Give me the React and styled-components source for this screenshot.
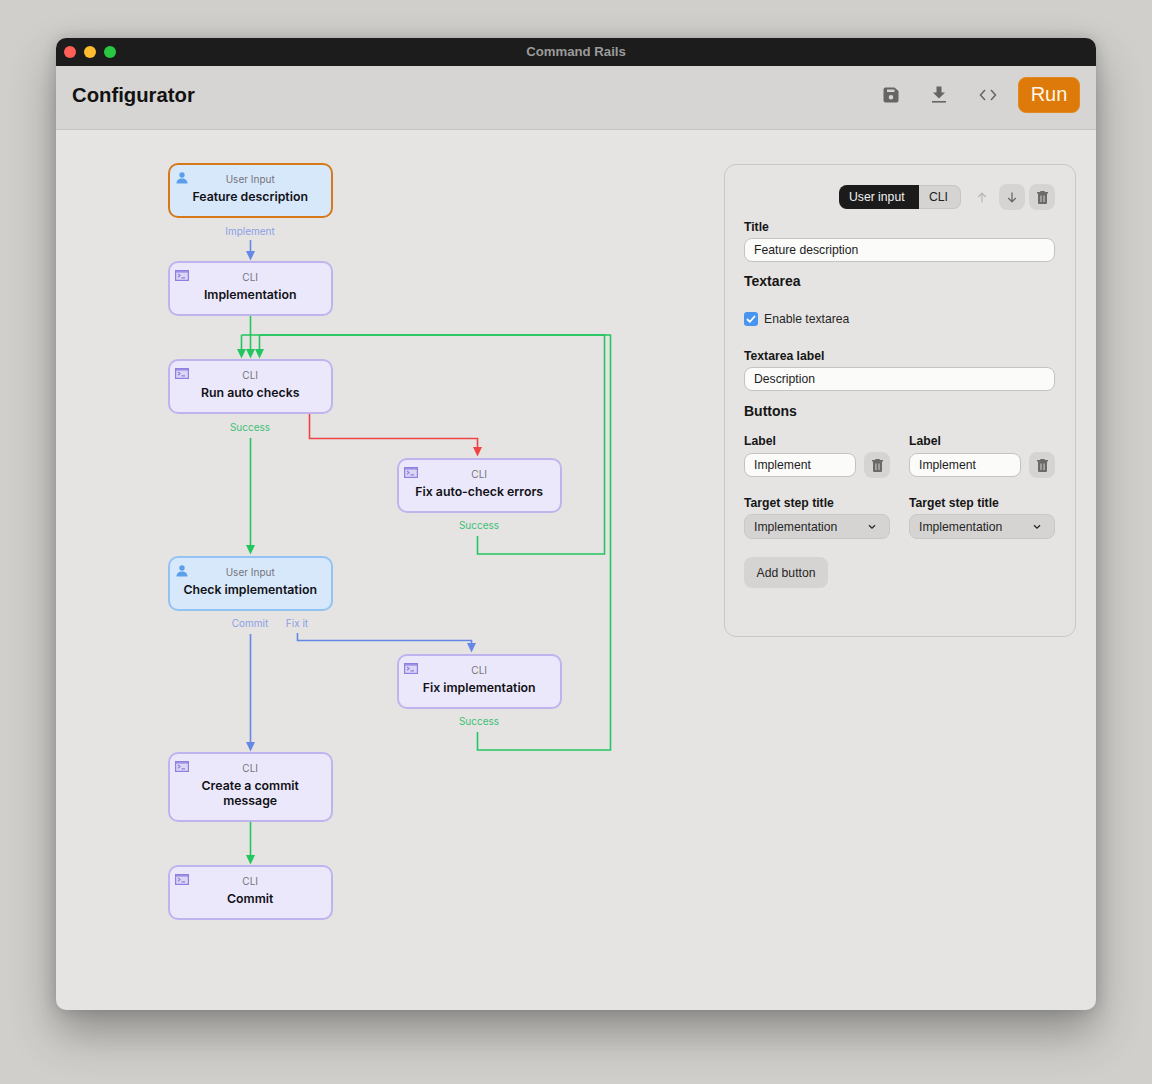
import React from "react";
import styled, { createGlobalStyle } from "styled-components";

const Global = createGlobalStyle`
  html, body {
    margin: 0;
    background: #d0cfcc;
    font-family: "Liberation Sans", Arial, sans-serif;
  }
`;

const Page = styled.div`
  width: 1152px;
  height: 1084px;
  padding: 38px 56px 74px;
  box-sizing: border-box;
  overflow: hidden;
  background: #d0cfcc;
`;

const Window = styled.div`
  display: flex;
  flex-direction: column;
  height: 972px;
  border-radius: 10px;
  overflow: hidden;
  background: #e5e4e2;
  box-shadow: 0 22px 44px rgba(60, 60, 58, 0.46), 0 0 14px rgba(60, 60, 58, 0.24);
`;

const TitleBar = styled.div`
  position: relative;
  display: flex;
  align-items: center;
  justify-content: center;
  flex: none;
  height: 28px;
  padding-bottom: 2px;
  box-sizing: border-box;
  background: #1c1c1c;
  color: #9b9b9b;
  font-size: 13.2px;
  font-weight: 700;
`;

const Lights = styled.div`
  position: absolute;
  left: 8px;
  top: 8px;
  display: flex;
  gap: 8px;
`;

const Light = styled.span`
  width: 12px;
  height: 12px;
  border-radius: 50%;
  background: ${(p) => p.$color};
`;

const Toolbar = styled.div`
  display: flex;
  align-items: center;
  flex: none;
  height: 64px;
  padding: 0 16px 6px;
  box-sizing: border-box;
  background: #d6d5d3;
  border-bottom: 1px solid #c6c5c3;
`;

const Heading = styled.h1`
  flex: 1;
  margin: 2px 0 0;
  font-size: 20.3px;
  font-weight: 700;
  color: #121212;
`;

const ToolIcon = styled.button`
  display: flex;
  align-items: center;
  justify-content: center;
  width: 24px;
  height: 24px;
  margin-right: ${(p) => p.$gap}px;
  padding: 0;
  border: none;
  background: none;
  color: #666564;
`;

const RunButton = styled.button`
  width: 62px;
  height: 36px;
  padding: 0;
  border: 1px solid #e28a22;
  border-radius: 8px;
  background: #dd7a09;
  color: #fff6e8;
  font-family: inherit;
  font-size: 20px;
`;

const Body = styled.div`
  display: flex;
  flex: 1;
  min-height: 0;
`;

const Graph = styled.div`
  position: relative;
  flex: 1;
`;

const Edges = styled.svg`
  position: absolute;
  left: -0.3px;
  top: 0;
  width: 668px;
  height: 880px;
`;

const nodeTheme = {
  input: { bg: "#d8e8fb", border: "#93c3f3", icon: "#5b9fec" },
  cli: { bg: "#ece8fc", border: "#c0b4ee", icon: "#8f7fe0" },
};

const Node = styled.div`
  position: absolute;
  left: ${(p) => p.$x}px;
  top: ${(p) => p.$y}px;
  width: 165px;
  height: ${(p) => p.$h}px;
  box-sizing: border-box;
  padding: 7px 10px 0;
  border: 2px solid ${(p) => (p.$active ? "#d5791a" : nodeTheme[p.$kind].border)};
  border-radius: 10px;
  background: ${(p) => nodeTheme[p.$kind].bg};
  text-align: center;
  font-family: Inter, sans-serif;
`;

const NodeIcon = styled.span`
  position: absolute;
  left: ${(p) => (p.$kind === "input" ? 6 : 5)}px;
  top: 7px;
  display: flex;
  color: ${(p) => nodeTheme[p.$kind].icon};
`;

const NodeKind = styled.div`
  font-size: 10px;
  line-height: 14px;
  color: #74747a;
`;

const NodeTitle = styled.div`
  margin-top: 3px;
  font-size: 12.3px;
  font-weight: 600;
  line-height: 15px;
  color: #111116;
`;

const EdgeLabel = styled.span`
  position: absolute;
  left: ${(p) => p.$x}px;
  top: ${(p) => p.$y}px;
  transform: translate(-50%, -50%);
  font-family: Inter, sans-serif;
  font-size: 10px;
  color: ${(p) => p.$color};
  white-space: nowrap;
`;

const Panel = styled.div`
  display: flex;
  flex-direction: column;
  flex: none;
  align-self: flex-start;
  width: 352px;
  height: 473px;
  margin: 34px 20px 0 0;
  padding: 19px 20px 19px 19px;
  box-sizing: border-box;
  border: 1px solid #c9c8c6;
  border-radius: 12px;
`;

const PanelTop = styled.div`
  display: flex;
  align-items: center;
  justify-content: flex-end;
  height: 26px;
  margin-bottom: 10px;
`;

const Segmented = styled.div`
  display: flex;
  height: 24px;
  margin-right: 8px;
  border-radius: 8px;
  overflow: hidden;
  background: #d5d4d2;
  box-shadow: inset 0 0 0 1px #c8c7c5;
`;

const Segment = styled.span`
  display: flex;
  align-items: center;
  width: ${(p) => (p.$on ? 80 : 42)}px;
  padding-left: 10px;
  box-sizing: border-box;
  background: ${(p) => (p.$on ? "#1b1b1b" : "transparent")};
  color: ${(p) => (p.$on ? "#f2f2f2" : "#222")};
  font-size: 12.2px;
`;

const IconButton = styled.button`
  display: flex;
  align-items: center;
  justify-content: center;
  flex: none;
  width: 26px;
  height: 26px;
  margin-left: ${(p) => p.$gap || 0}px;
  padding: 0;
  border: none;
  border-radius: 8px;
  background: ${(p) => (p.$plain ? "none" : "#d5d4d2")};
  color: ${(p) => (p.$plain ? "#b9b8b6" : "#6b6a69")};
`;

const FieldLabel = styled.label`
  display: block;
  margin-bottom: 4px;
  font-size: 12.2px;
  font-weight: 700;
  line-height: 14px;
  color: #161616;
`;

const TextInput = styled.div`
  display: flex;
  align-items: center;
  width: 100%;
  height: 24px;
  padding: 0 9px;
  box-sizing: border-box;
  border: 1px solid #c4c3c1;
  border-radius: 8px;
  background: #fbfbfa;
  font-size: 12.2px;
  color: #1c1c1c;
`;

const SubHeading = styled.h2`
  margin: ${(p) => p.$top}px 0 ${(p) => p.$bottom}px;
  font-size: 14px;
  font-weight: 700;
  line-height: 18px;
  color: #161616;
`;

const CheckRow = styled.div`
  display: flex;
  align-items: center;
  gap: 6px;
  height: 14px;
  margin-bottom: 23px;
  font-size: 12.2px;
  color: #262626;
`;

const CheckBox = styled.span`
  display: flex;
  align-items: center;
  justify-content: center;
  width: 14px;
  height: 14px;
  border-radius: 3px;
  background: #4795ef;
  color: #fff;
`;

const ButtonGrid = styled.div`
  display: grid;
  grid-template-columns: 146px 146px;
  column-gap: 19px;
`;

const InputRow = styled.div`
  display: flex;
  align-items: center;
  gap: 8px;
  margin-bottom: 18px;
`;

const SelectBox = styled.div`
  display: flex;
  align-items: center;
  justify-content: space-between;
  height: 25px;
  padding: 0 13px 0 9px;
  box-sizing: border-box;
  border: 1px solid #c9c8c6;
  border-radius: 8px;
  background: #d5d4d2;
  font-size: 12.2px;
  color: #262626;
`;

const AddButton = styled.button`
  align-self: flex-start;
  width: 84px;
  height: 31px;
  margin-top: 18px;
  padding: 0;
  border: none;
  border-radius: 8px;
  background: #d5d4d2;
  color: #262626;
  font-family: inherit;
  font-size: 12.2px;
`;

const SaveIcon = () => (
  <svg width="16" height="16" viewBox="0 0 16 16" fill="currentColor">
    <path
      fillRule="evenodd"
      d="M2.5 0.5h9L15.5 4v9.5a2 2 0 0 1-2 2h-11a2 2 0 0 1-2-2v-11a2 2 0 0 1 2-2zM4 2.5v2.5h7.5V2.5zM8 8a2.3 2.3 0 1 0 0 4.6A2.3 2.3 0 0 0 8 8z"
    />
  </svg>
);

const DownloadIcon = () => (
  <svg width="16" height="18" viewBox="0 0 16 18" fill="currentColor">
    <path d="M5.5 0.5h5v6h3.6L8 12.6 1.9 6.5h3.6z" />
    <rect x="1" y="15" width="14" height="1.6" />
  </svg>
);

const CodeIcon = () => (
  <svg width="18" height="12" viewBox="0 0 18 12" fill="none" stroke="currentColor" strokeWidth="1.5">
    <path d="M6 1 1.5 6 6 11M12 1l4.5 5L12 11" />
  </svg>
);

const UserIcon = () => (
  <svg width="12" height="12" viewBox="0 0 12 12" fill="currentColor">
    <circle cx="6" cy="3" r="2.7" />
    <path d="M0.5 11.5c0-3.2 2.4-5 5.5-5s5.5 1.8 5.5 5z" />
  </svg>
);

const TerminalIcon = () => (
  <svg width="14" height="11" viewBox="0 0 14 11" fill="none" stroke="currentColor" strokeWidth="1.2">
    <rect x="0.6" y="0.6" width="12.8" height="9.8" fill="currentColor" fillOpacity="0.18" />
    <path d="M0.6 1.8h12.8M3 4l2 1.6L3 7.2M6.5 7.8H10" />
  </svg>
);

const TrashIcon = () => (
  <svg width="11" height="13" viewBox="0 0 11 13" fill="currentColor">
    <path d="M3.5 0h4L8 1h3v1.6H10V12a1 1 0 0 1-1 1H2a1 1 0 0 1-1-1V2.600H0V1h3z" />
    <rect x="3.3" y="4.5" width="1.3" height="6.5" fill="#d5d4d2" opacity="0.75" />
    <rect x="6.4" y="4.5" width="1.3" height="6.5" fill="#d5d4d2" opacity="0.75" />
  </svg>
);

const ArrowIcon = ({ down }) => (
  <svg width="10" height="11" viewBox="0 0 10 11" fill="none" stroke="currentColor" strokeWidth="1.3">
    <path d={down ? "M5 0.5v9M1.2 6 5 9.8 8.8 6" : "M5 10.5v-9M1.2 5 5 1.2 8.8 5"} />
  </svg>
);

const Chevron = () => (
  <svg width="8" height="6" viewBox="0 0 8 6" fill="none" stroke="currentColor" strokeWidth="1.3">
    <path d="M1 1.2l3 3 3-3" />
  </svg>
);

const GREEN = "#22c55e";
const BLUE = "#6587e6";
const RED = "#ef4444";

// graph coordinates: window content origin is 56,130 on the page
const edges = [
  { color: BLUE, d: "M194.5 110V122", tip: [194.5, 131] },
  { color: GREEN, d: "M194.5 186V220", tip: [194.5, 229] },
  { color: GREEN, d: "M185.5 205V220", tip: [185.5, 229] },
  { color: GREEN, d: "M203.5 205V220", tip: [203.5, 229] },
  { color: GREEN, d: "M185.5 205H554.5V620H421.5V602" },
  { color: GREEN, d: "M203.5 205H548.5V424H421.5V406" },
  { color: RED, d: "M253.5 284V308.5H421.5V318", tip: [421.5, 327] },
  { color: GREEN, d: "M194.5 308V416", tip: [194.5, 425] },
  { color: BLUE, d: "M194.5 504V613", tip: [194.5, 622] },
  { color: BLUE, d: "M241.5 503V510.5H415.5V514", tip: [415.5, 523] },
  { color: GREEN, d: "M194.5 692V726", tip: [194.5, 735] },
];

const nodes = [
  { x: 111.7, y: 33, h: 55, kind: "input", label: "User Input", title: "Feature description", active: true },
  { x: 111.7, y: 131, h: 55, kind: "cli", label: "CLI", title: "Implementation" },
  { x: 111.7, y: 229, h: 55, kind: "cli", label: "CLI", title: "Run auto checks" },
  { x: 340.7, y: 328, h: 55, kind: "cli", label: "CLI", title: "Fix auto-check errors" },
  { x: 111.7, y: 426, h: 55, kind: "input", label: "User Input", title: "Check implementation" },
  { x: 340.7, y: 524, h: 55, kind: "cli", label: "CLI", title: "Fix implementation" },
  { x: 111.7, y: 622, h: 70, kind: "cli", label: "CLI", title: "Create a commit message" },
  { x: 111.7, y: 735, h: 55, kind: "cli", label: "CLI", title: "Commit" },
];

const labels = [
  { x: 194, y: 101, color: "#8c9fe6", text: "Implement" },
  { x: 194, y: 297, color: "#3fbf78", text: "Success" },
  { x: 423, y: 395, color: "#3fbf78", text: "Success" },
  { x: 194, y: 493, color: "#8c9fe6", text: "Commit" },
  { x: 241, y: 493, color: "#8c9fe6", text: "Fix it" },
  { x: 423, y: 591, color: "#3fbf78", text: "Success" },
];

const buttons = [0, 1];

export default function App() {
  return (
    <Page>
      <Global />
      <Window>
        <TitleBar>
          <Lights>
            <Light $color="#ff5f57" />
            <Light $color="#febc2e" />
            <Light $color="#28c840" />
          </Lights>
          Command Rails
        </TitleBar>
        <Toolbar>
          <Heading>Configurator</Heading>
          <ToolIcon $gap={24}>
            <SaveIcon />
          </ToolIcon>
          <ToolIcon $gap={25}>
            <DownloadIcon />
          </ToolIcon>
          <ToolIcon $gap={18}>
            <CodeIcon />
          </ToolIcon>
          <RunButton>Run</RunButton>
        </Toolbar>
        <Body>
          <Graph>
            <Edges viewBox="0 0 668 880" fill="none" strokeWidth="1.6">
              {edges.map((e) => (
                <g key={e.d}>
                  <path d={e.d} stroke={e.color} />
                  {e.tip && (
                    <path d={`M${e.tip[0] - 4.5} ${e.tip[1] - 10}h9l-4.5 9.5z`} fill={e.color} />
                  )}
                </g>
              ))}
            </Edges>
            {labels.map((l) => (
              <EdgeLabel key={l.text + l.y + l.x} $x={l.x} $y={l.y} $color={l.color}>
                {l.text}
              </EdgeLabel>
            ))}
            {nodes.map((n) => (
              <Node key={n.title} $x={n.x} $y={n.y} $h={n.h} $kind={n.kind} $active={n.active}>
                <NodeIcon $kind={n.kind}>
                  {n.kind === "input" ? <UserIcon /> : <TerminalIcon />}
                </NodeIcon>
                <NodeKind>{n.label}</NodeKind>
                <NodeTitle>{n.title}</NodeTitle>
              </Node>
            ))}
          </Graph>
          <Panel>
            <PanelTop>
              <Segmented>
                <Segment $on>User input</Segment>
                <Segment>CLI</Segment>
              </Segmented>
              <IconButton $plain>
                <ArrowIcon />
              </IconButton>
              <IconButton $gap={4}>
                <ArrowIcon down />
              </IconButton>
              <IconButton $gap={4}>
                <TrashIcon />
              </IconButton>
            </PanelTop>
            <FieldLabel>Title</FieldLabel>
            <TextInput>Feature description</TextInput>
            <SubHeading $top={10} $bottom={22}>Textarea</SubHeading>
            <CheckRow>
              <CheckBox>
                <svg width="10" height="8" viewBox="0 0 10 8" fill="none" stroke="currentColor" strokeWidth="1.8">
                  <path d="M1 4l2.8 2.8L9 1" />
                </svg>
              </CheckBox>
              Enable textarea
            </CheckRow>
            <FieldLabel>Textarea label</FieldLabel>
            <TextInput>Description</TextInput>
            <SubHeading $top={11} $bottom={14}>Buttons</SubHeading>
            <ButtonGrid>
              {buttons.map((b) => (
                <div key={b}>
                  <FieldLabel>Label</FieldLabel>
                  <InputRow>
                    <TextInput>Implement</TextInput>
                    <IconButton>
                      <TrashIcon />
                    </IconButton>
                  </InputRow>
                  <FieldLabel>Target step title</FieldLabel>
                  <SelectBox>
                    Implementation
                    <Chevron />
                  </SelectBox>
                </div>
              ))}
            </ButtonGrid>
            <AddButton>Add button</AddButton>
          </Panel>
        </Body>
      </Window>
    </Page>
  );
}
